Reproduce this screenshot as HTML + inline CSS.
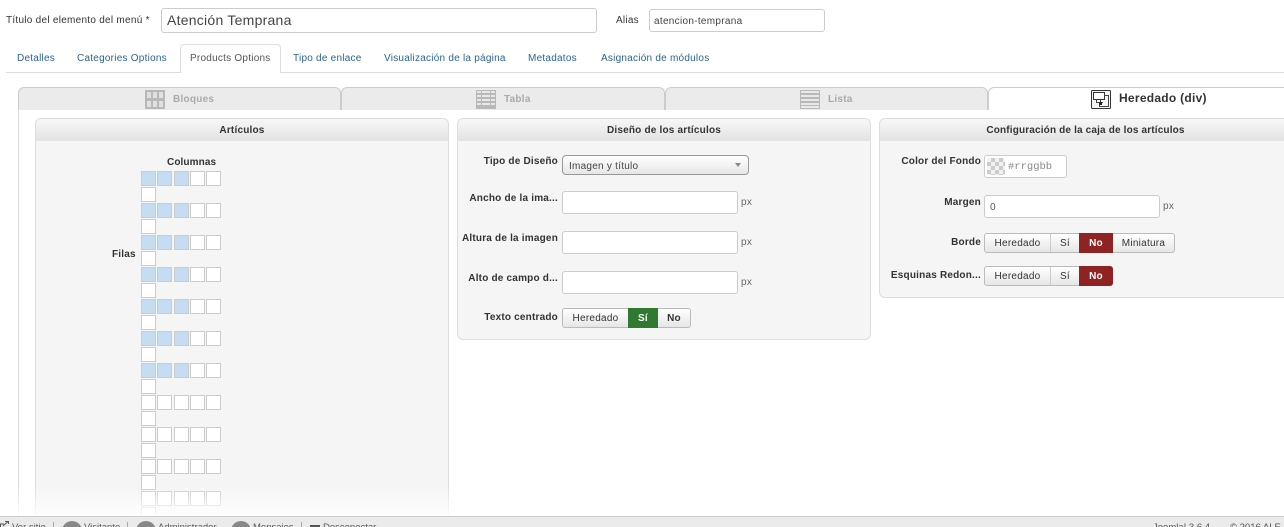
<!DOCTYPE html>
<html lang="es"><head><meta charset="utf-8"><title>Menú</title>
<style>
html,body{margin:0;padding:0;background:#fff;width:1284px;height:527px;overflow:hidden}
#w{left:0;top:0;width:1284px;height:527px;overflow:hidden;font-family:"Liberation Sans",Arial,sans-serif;font-size:11px;color:#333;background:#fff}
div,span,i,svg{position:absolute;box-sizing:border-box}
.t{white-space:nowrap;line-height:14px;letter-spacing:0}
.u{line-height:16px}
.l{color:#2a6496;font-size:10px;letter-spacing:.24px;line-height:16px}
.b{font-weight:bold;letter-spacing:.2px;text-align:right;color:#333;font-size:10px;line-height:16px}
.in{background:#fff;border:1px solid #ccc;border-radius:3px}
.tab{top:87px;height:23px;background:#ebebeb;border:1px solid #ccc;border-bottom:0;border-radius:6px 6px 0 0}
.tt{top:92px;font-weight:bold;color:#aaa;font-size:10px;letter-spacing:.25px;line-height:16px}
.p{background:#f5f5f5;border:1px solid #ddd;border-radius:6px}
.h{left:0;right:0;top:0;height:22px;background:linear-gradient(#f7f7f7,#e2e2e2);border-radius:5px 5px 0 0;text-align:center;font-weight:bold;line-height:24px;font-size:10px;letter-spacing:.2px;color:#333;white-space:nowrap}
.c{width:15px;height:15px;background:#fff;border:1px solid #ccc}
.s{background:#c6dcf3}
.bg{height:20px;background:linear-gradient(#fff,#e6e6e6);border:1px solid #bbb;border-radius:3px}
.bt{top:0;height:18px;line-height:20px;text-align:center;font-size:10px;letter-spacing:.25px;color:#333;border-right:1px solid #ccc}
.gr{background:#2f7a30;color:#fff;font-weight:bold;border:0}
.re{background:#8f2222;color:#fff;font-weight:bold;border:0}
.px{color:#666;font-size:10px;letter-spacing:.3px;line-height:16px}
.f{top:521px;font-size:9.5px;color:#555}
</style></head><body>
<div id="w">

<div class="t u" style="left:6px;top:13px;font-size:10px;letter-spacing:.27px">Título del elemento del menú *</div>
<div class="in" style="left:161px;top:8px;width:436px;height:25px"></div>
<div class="t" style="left:167px;top:12px;font-size:14px;line-height:16px;color:#444;letter-spacing:.25px">Atención Temprana</div>
<div class="t u" style="left:616px;top:13px;font-size:10px;letter-spacing:.25px">Alias</div>
<div class="in" style="left:649px;top:9px;width:176px;height:23px"></div>
<div class="t u" style="left:654px;top:14px;font-size:10px;letter-spacing:.3px;color:#444">atencion-temprana</div>

<div style="left:6px;top:72px;width:1278px;height:1px;background:#ddd"></div>
<div style="left:180px;top:44px;width:101px;height:29px;background:#fff;border:1px solid #ddd;border-bottom:0;border-radius:4px 4px 0 0"></div>
<div class="t l" style="left:17px;top:51px">Detalles</div>
<div class="t l" style="left:77px;top:51px">Categories Options</div>
<div class="t l" style="left:190px;top:51px;color:#555">Products Options</div>
<div class="t l" style="left:293px;top:51px">Tipo de enlace</div>
<div class="t l" style="left:384px;top:51px">Visualización de la página</div>
<div class="t l" style="left:528px;top:51px">Metadatos</div>
<div class="t l" style="left:601px;top:51px">Asignación de módulos</div>

<div style="left:18px;top:105px;width:1px;height:411px;background:#ddd"></div>
<div class="tab" style="left:18px;width:323px"></div>
<div class="tab" style="left:341px;width:324px"></div>
<div class="tab" style="left:665px;width:323px"></div>
<div class="tab" style="left:988px;width:310px;background:#fff"></div>

<svg style="left:145px;top:90px" width="20" height="19" viewBox="0 0 20 19"><rect width="20" height="19" fill="#b8b8b8"/><g fill="#e0e0e0"><rect x="2" y="2" width="4" height="6"/><rect x="8" y="2" width="4" height="6"/><rect x="14" y="2" width="4" height="6"/><rect x="2" y="11" width="4" height="6"/><rect x="8" y="11" width="4" height="6"/><rect x="14" y="11" width="4" height="6"/></g></svg>
<div class="t tt" style="left:173px">Bloques</div>
<svg style="left:476px;top:90px" width="20" height="19" viewBox="0 0 20 19"><rect width="20" height="19" fill="#b8b8b8"/><g fill="#e8e8e8"><rect x="1" y="1" width="18" height="2"/><rect x="1" y="5" width="18" height="2"/><rect x="1" y="9" width="18" height="2"/><rect x="1" y="13" width="18" height="2"/></g><rect x="5" width="1" height="19" fill="#b8b8b8"/><rect x="14" width="1" height="19" fill="#b8b8b8"/></svg>
<div class="t tt" style="left:504px">Tabla</div>
<svg style="left:800px;top:90px" width="20" height="19" viewBox="0 0 20 19"><rect width="20" height="19" fill="#b8b8b8"/><g fill="#e8e8e8"><rect x="1" y="1" width="18" height="2"/><rect x="1" y="5" width="18" height="2"/><rect x="1" y="9" width="18" height="2"/><rect x="1" y="13" width="18" height="2"/><rect x="1" y="16" width="18" height="2"/></g></svg>
<div class="t tt" style="left:828px">Lista</div>
<svg style="left:1091px;top:90px" width="20" height="19" viewBox="0 0 20 19"><rect x=".5" y=".5" width="19" height="18" fill="#f4f4f4" stroke="#333" rx="1"/><rect x="2.5" y="2.5" width="11" height="7" fill="#fff" stroke="#333"/><path d="M13 5.5H17.5V16.5H8.5V13M5.5 9.5V12.5H12M9.5 10V15" fill="none" stroke="#444"/><rect x="8" y="12" width="3" height="3" fill="#222"/></svg>
<div class="t" style="left:1119px;top:91px;font-weight:bold;font-size:12px;letter-spacing:.27px;color:#333">Heredado (div)</div>

<div class="p" style="left:35px;top:118px;width:414px;height:420px"><div class="h">Artículos</div></div>
<div class="p" style="left:457px;top:118px;width:414px;height:222px"><div class="h">Diseño de los artículos</div></div>
<div class="p" style="left:879px;top:118px;width:420px;height:180px"><div class="h" style="width:411px;right:auto;letter-spacing:.16px">Configuración de la caja de los artículos</div></div>

<div class="t b" style="left:167px;top:155px;letter-spacing:.1px">Columnas</div>
<div class="t b" style="left:112px;top:247px">Filas</div>

<div style="left:0;top:171px;width:300px;height:345px">
<i class="c s" style="left:141px;top:0"></i><i class="c s" style="left:157px;top:0"></i><i class="c s" style="left:174px;top:0"></i><i class="c" style="left:190px;top:0"></i><i class="c" style="left:206px;top:0"></i><i class="c" style="left:141px;top:16px"></i>
<i class="c s" style="left:141px;top:32px"></i><i class="c s" style="left:157px;top:32px"></i><i class="c s" style="left:174px;top:32px"></i><i class="c" style="left:190px;top:32px"></i><i class="c" style="left:206px;top:32px"></i><i class="c" style="left:141px;top:48px"></i>
<i class="c s" style="left:141px;top:64px"></i><i class="c s" style="left:157px;top:64px"></i><i class="c s" style="left:174px;top:64px"></i><i class="c" style="left:190px;top:64px"></i><i class="c" style="left:206px;top:64px"></i><i class="c" style="left:141px;top:80px"></i>
<i class="c s" style="left:141px;top:96px"></i><i class="c s" style="left:157px;top:96px"></i><i class="c s" style="left:174px;top:96px"></i><i class="c" style="left:190px;top:96px"></i><i class="c" style="left:206px;top:96px"></i><i class="c" style="left:141px;top:112px"></i>
<i class="c s" style="left:141px;top:128px"></i><i class="c s" style="left:157px;top:128px"></i><i class="c s" style="left:174px;top:128px"></i><i class="c" style="left:190px;top:128px"></i><i class="c" style="left:206px;top:128px"></i><i class="c" style="left:141px;top:144px"></i>
<i class="c s" style="left:141px;top:160px"></i><i class="c s" style="left:157px;top:160px"></i><i class="c s" style="left:174px;top:160px"></i><i class="c" style="left:190px;top:160px"></i><i class="c" style="left:206px;top:160px"></i><i class="c" style="left:141px;top:176px"></i>
<i class="c s" style="left:141px;top:192px"></i><i class="c s" style="left:157px;top:192px"></i><i class="c s" style="left:174px;top:192px"></i><i class="c" style="left:190px;top:192px"></i><i class="c" style="left:206px;top:192px"></i><i class="c" style="left:141px;top:208px"></i>
<i class="c" style="left:141px;top:224px"></i><i class="c" style="left:157px;top:224px"></i><i class="c" style="left:174px;top:224px"></i><i class="c" style="left:190px;top:224px"></i><i class="c" style="left:206px;top:224px"></i><i class="c" style="left:141px;top:240px"></i>
<i class="c" style="left:141px;top:256px"></i><i class="c" style="left:157px;top:256px"></i><i class="c" style="left:174px;top:256px"></i><i class="c" style="left:190px;top:256px"></i><i class="c" style="left:206px;top:256px"></i><i class="c" style="left:141px;top:272px"></i>
<i class="c" style="left:141px;top:288px"></i><i class="c" style="left:157px;top:288px"></i><i class="c" style="left:174px;top:288px"></i><i class="c" style="left:190px;top:288px"></i><i class="c" style="left:206px;top:288px"></i><i class="c" style="left:141px;top:304px"></i>
<i class="c" style="left:141px;top:320px"></i><i class="c" style="left:157px;top:320px"></i><i class="c" style="left:174px;top:320px"></i><i class="c" style="left:190px;top:320px"></i><i class="c" style="left:206px;top:320px"></i><i class="c" style="left:141px;top:336px;height:9px;border-bottom:0"></i>
</div>
<div style="left:0;top:486px;width:1284px;height:30px;background:linear-gradient(rgba(255,255,255,0),rgba(255,255,255,.9))"></div>

<div class="t b" style="right:726px;top:154px">Tipo de Diseño</div>
<div class="bg" style="left:562px;top:155px;width:187px;border-radius:4px;border-color:#999"></div>
<div class="t u" style="left:569px;top:159px;font-size:10px;letter-spacing:.25px;color:#444">Imagen y título</div>
<div style="left:735px;top:163px;width:0;height:0;border:3px solid transparent;border-top:4px solid #888;border-bottom:0"></div>

<div class="t b" style="right:726px;top:191px">Ancho de la ima...</div>
<div class="in" style="left:562px;top:191px;width:176px;height:23px"></div>
<div class="t px" style="left:741px;top:195px">px</div>
<div class="t b" style="right:726px;top:231px">Altura de la imagen</div>
<div class="in" style="left:562px;top:231px;width:176px;height:23px"></div>
<div class="t px" style="left:741px;top:235px">px</div>
<div class="t b" style="right:726px;top:271px">Alto de campo d...</div>
<div class="in" style="left:562px;top:271px;width:176px;height:23px"></div>
<div class="t px" style="left:741px;top:275px">px</div>
<div class="t b" style="right:726px;top:310px">Texto centrado</div>
<div class="bg" style="left:562px;top:308px;width:129px">
<span class="bt" style="left:0;width:65px;border:0">Heredado</span>
<span class="bt gr" style="left:65px;width:30px;top:-1px;height:20px;line-height:22px">Sí</span>
<span class="bt" style="left:95px;width:32px;border:0;font-weight:bold">No</span></div>

<div class="t b" style="right:303px;top:154px">Color del Fondo</div>
<div class="in" style="left:984px;top:155px;width:83px;height:23px"></div>
<div style="left:987px;top:158px;width:18px;height:17px;background:repeating-conic-gradient(#ccc 0 25%,#f2f2f2 0 50%) 0 0/8px 8px"></div>
<div class="t" style="left:1008px;top:160px;font-family:'Liberation Mono',monospace;font-size:10.5px;color:#888">#rrggbb</div>
<div class="t b" style="right:303px;top:195px">Margen</div>
<div class="in" style="left:984px;top:195px;width:176px;height:23px"></div>
<div class="t u" style="left:990px;top:200px;font-size:10px;color:#555">0</div>
<div class="t px" style="left:1163px;top:199px">px</div>
<div class="t b" style="right:303px;top:235px">Borde</div>
<div class="bg" style="left:984px;top:233px;width:191px">
<span class="bt" style="left:0;width:66px">Heredado</span>
<span class="bt" style="left:66px;width:28px;border:0">Sí</span>
<span class="bt re" style="left:94px;width:34px;top:-1px;height:20px;line-height:22px">No</span>
<span class="bt" style="left:128px;width:61px;border:0">Miniatura</span></div>
<div class="t b" style="right:303px;top:268px">Esquinas Redon...</div>
<div class="bg" style="left:984px;top:266px;width:129px">
<span class="bt" style="left:0;width:66px">Heredado</span>
<span class="bt" style="left:66px;width:28px;border:0">Sí</span>
<span class="bt re" style="left:94px;width:34px;top:-1px;height:20px;line-height:22px;border-radius:0 3px 3px 0">No</span></div>

<div style="left:0;top:516px;width:1284px;height:11px;background:#ebebeb;border-top:1px solid #ccc"></div>
<div class="t f" style="left:12px">Ver sitio</div>
<div class="t f" style="left:84px">Visitante</div>
<div class="t f" style="left:158px">Administrador</div>
<div class="t f" style="left:253px">Mensajes</div>
<div class="t f" style="left:323px">Desconectar</div>
<div style="left:62px;top:521px;width:20px;height:20px;border-radius:50%;background:#888"></div>
<div style="left:136px;top:521px;width:20px;height:20px;border-radius:50%;background:#888"></div>
<div style="left:231px;top:521px;width:20px;height:20px;border-radius:50%;background:#888"></div>
<div style="left:310px;top:525px;width:10px;height:2px;background:#555"></div>
<svg style="left:0;top:521px" width="9" height="6" viewBox="0 0 9 6"><path d="M.5 6V3H4M3 5L8 .5M5 .5H8.5V3" fill="none" stroke="#555"/></svg>
<div style="left:53px;top:522px;width:1px;height:5px;background:#aaa"></div>
<div style="left:127px;top:522px;width:1px;height:5px;background:#aaa"></div>
<div style="left:301px;top:522px;width:1px;height:5px;background:#aaa"></div>
<div class="t f" style="left:1153px">Joomla! 3.6.4</div>
<div class="t f" style="left:1230px">© 2016 ALE</div>
</div>
</body></html>
